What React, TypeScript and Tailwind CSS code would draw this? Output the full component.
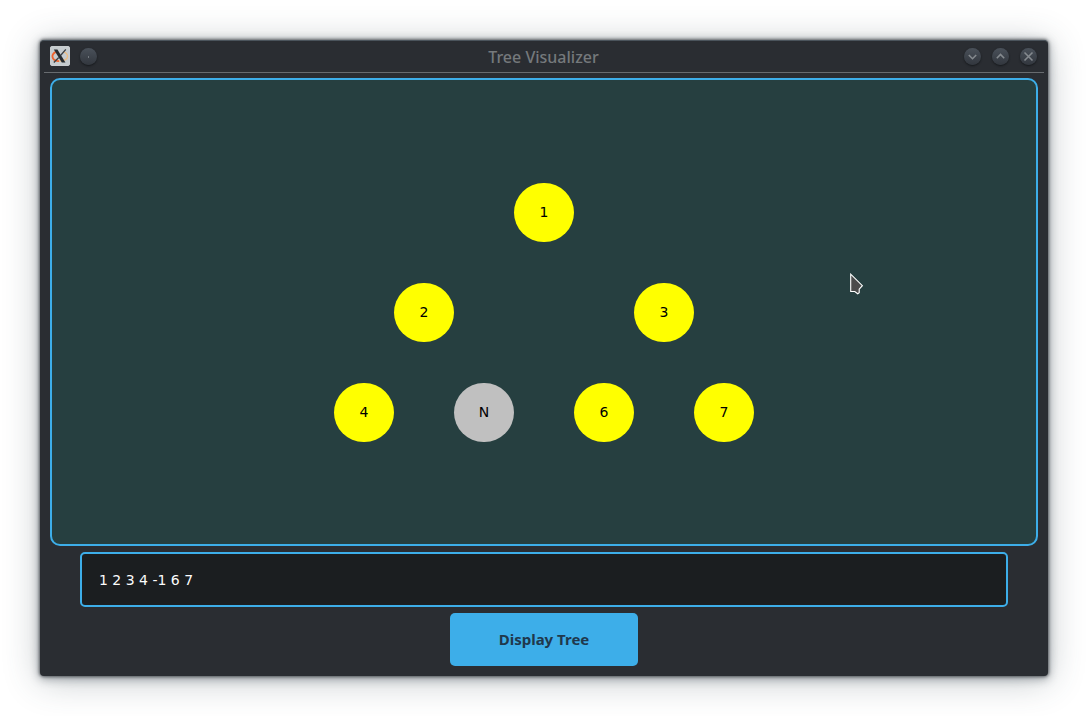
import { useState } from "react";

type TreeNode = { label: string; place: string; empty?: boolean };

const NODES: TreeNode[] = [
  { label: "1", place: "left-1/2 top-[103px]" },
  { label: "2", place: "left-[calc(50%-120px)] top-[203px]" },
  { label: "3", place: "left-[calc(50%+120px)] top-[203px]" },
  { label: "4", place: "left-[calc(50%-180px)] top-[303px]" },
  { label: "N", place: "left-[calc(50%-60px)] top-[303px]", empty: true },
  { label: "6", place: "left-[calc(50%+60px)] top-[303px]" },
  { label: "7", place: "left-[calc(50%+180px)] top-[303px]" },
];

function AppIcon() {
  return (
    <svg viewBox="0 0 21 21" className="size-5" aria-hidden="true">
      <rect x="0.5" y="0.5" width="20" height="20" rx="1.5" fill="#c6cccf" stroke="#d0d4d6" />
      <path d="M6 6.2C3.6 7.5 2.3 9.4 2.6 11.5C3 14.2 6 15.9 9.5 15.9" fill="none" stroke="#f0622d" strokeWidth="1.9" />
      <path d="M9.5 15.9C14.3 16 18.4 14.2 18.4 11C18.4 8.4 16.8 6.9 14 6.2" fill="none" stroke="#edbd83" strokeWidth="1.5" />
      <path d="M4 3.7H7.8L16.2 17.2H12.4Z" fill="#262b2f" />
      <path d="M16.6 3.5L11.3 9.7M9.2 12L4 17.4" stroke="#3b4044" strokeWidth="1.4" />
    </svg>
  );
}

function WindowButton({ label, children }: { label: string; children: React.ReactNode }) {
  return (
    <button
      type="button"
      aria-label={label}
      className="flex size-[17px] items-center justify-center rounded-full bg-linear-to-b from-[#4a515a] to-[#32373e] shadow-[0_1px_2px_#15181b]"
    >
      <svg viewBox="0 0 17 17" className="size-[17px]" fill="none" stroke="#858a8f" strokeWidth="1.6" aria-hidden="true">
        {children}
      </svg>
    </button>
  );
}

export default function App() {
  const [value, setValue] = useState("1 2 3 4 -1 6 7");

  return (
    <div className="flex min-h-screen bg-white p-10 font-['DejaVu_Sans',sans-serif]">
      <main className="flex flex-1 flex-col rounded-[4px] border-t border-[#4b545c] bg-[#2a2d32] pb-[10px] shadow-[0_0_3px_1px_rgba(35,40,45,0.6),0_2px_10px_1px_rgba(40,50,60,0.4),0_4px_36px_rgba(60,75,85,0.32)]">
        <header className="mx-1 grid h-8 grid-cols-[1fr_auto_1fr] items-center border-b border-[#686c70] pl-[6px] pr-[7px]">
          <div className="flex items-center gap-[10px] pb-px">
            <AppIcon />
            <WindowButton label="Window options">
              <rect x="8" y="8" width="1" height="2" fill="#747a80" stroke="none" />
            </WindowButton>
          </div>
          <h1 className="font-['Noto_Sans','Open_Sans',sans-serif] text-base font-medium text-[#75797c]">Tree Visualizer</h1>
          <div className="flex items-center justify-end gap-[11px] pb-px">
            <WindowButton label="Minimize">
              <path d="M4.8 7L8.5 10.7L12.2 7" />
            </WindowButton>
            <WindowButton label="Maximize">
              <path d="M4.8 10.2L8.5 6.5L12.2 10.2" />
            </WindowButton>
            <WindowButton label="Close">
              <path d="M4.5 4.5L12.5 12.5M12.5 4.5L4.5 12.5" />
            </WindowButton>
          </div>
        </header>

        <section
          aria-label="Tree"
          className="relative mx-[10px] mt-[5px] min-h-[400px] flex-1 rounded-[10px] border-2 border-[#3daee9] bg-[#263f40]"
        >
          {NODES.map((node) => (
            <div
              key={node.label}
              className={`absolute flex h-[59px] w-[60px] -translate-x-1/2 items-center justify-center rounded-full text-[14px] text-black ${node.place} ${
                node.empty ? "bg-[#c0c0c0]" : "bg-[#ffff00]"
              }`}
            >
              {node.label}
            </div>
          ))}
          <svg
            viewBox="0 0 14 22"
            className="absolute left-[calc(50%+306px)] top-[193px] h-[22px] w-[14px]"
            aria-hidden="true"
          >
            <path d="M0.7 1.2V18.5H4.8L7.7 20.8L9.2 19.8V16.2L12.4 12.7Z" fill="#4b4b4b" stroke="#fff" strokeWidth="1.1" />
          </svg>
        </section>

        <form
          className="mt-[6px] flex flex-col items-center gap-[6px] px-10"
          onSubmit={(event) => event.preventDefault()}
        >
          <input
            aria-label="Tree values"
            value={value}
            onChange={(event) => setValue(event.target.value)}
            className="h-[55px] w-full rounded-[5px] border-2 border-[#3daee9] bg-[#1b1e20] px-[17px] text-[14px] text-[#fcfcfc] outline-none"
          />
          <button
            type="submit"
            className="h-[53px] w-[188px] rounded-[5px] bg-[#3daee9] font-['Noto_Sans','Open_Sans',sans-serif] text-[15px] font-bold text-[#20384c]"
          >
            Display Tree
          </button>
        </form>
      </main>
    </div>
  );
}
